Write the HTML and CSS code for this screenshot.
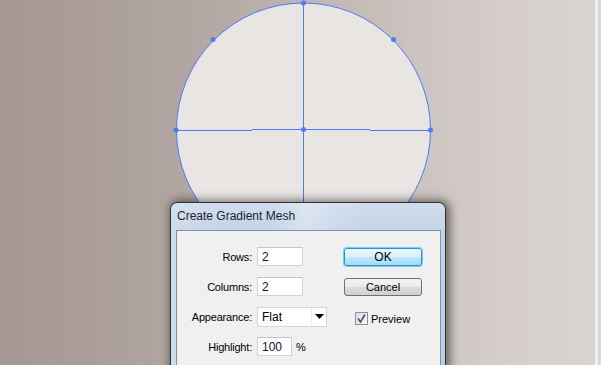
FILE: index.html
```html
<!DOCTYPE html>
<html lang="en">
<head>
    <meta charset="UTF-8">
    <title>Create Gradient Mesh</title>
    <link rel="stylesheet" href="styles.css">
</head>
<body>
    <div class="canvas">
        <svg class="artwork" width="601" height="365" viewBox="0 0 601 365">
            <rect x="595" y="0" width="3" height="365" fill="#f1efed"/>
            <rect x="598" y="0" width="3" height="365" fill="#dcd8d5"/>
            <circle cx="303.5" cy="130" r="127" fill="#e9e5e2" stroke="#4a7df7" stroke-width="1"/>
            <g stroke="#4a7df7" stroke-width="1" fill="none">
                <path d="M303.5 3 V129.5"/>
                <path d="M303.5 129.5 V365"/>
                <path d="M176 130.5 H252"/>
                <path d="M252 129.5 H370"/>
                <path d="M370 130.5 H430"/>
            </g>
            <g fill="#4a7df7">
                <circle cx="303.5" cy="3" r="2.5"/>
                <circle cx="176" cy="130" r="2.5"/>
                <circle cx="430.5" cy="130" r="2.5"/>
                <circle cx="303.5" cy="129.5" r="2.5"/>
                <circle cx="213" cy="39.5" r="2.5"/>
                <circle cx="393.5" cy="39.5" r="2.5"/>
            </g>
        </svg>

        <div class="dialog">
            <div class="title">Create Gradient Mesh</div>
            <div class="panel">
                <div class="form">
                    <label class="label">Rows:</label>
                    <div class="field"><input class="num" type="text" value="2"></div>
                    <div class="side"><button class="btn ok">OK</button></div>

                    <label class="label">Columns:</label>
                    <div class="field"><input class="num" type="text" value="2"></div>
                    <div class="side"><button class="btn">Cancel</button></div>

                    <label class="label">Appearance:</label>
                    <div class="field">
                        <div class="select">
                            <span class="select-value">Flat</span>
                            <span class="select-arrow">
                                <svg width="9" height="5" viewBox="0 0 9 5"><path d="M0 0 H9 L4.5 5 Z" fill="#000"/></svg>
                            </span>
                        </div>
                    </div>
                    <div class="side">
                        <div class="check">
                            <span class="box">
                                <svg width="11" height="11" viewBox="0 0 11 11"><path d="M2 5.5 L4.5 9 L9 1.5" fill="none" stroke="#3b4d8a" stroke-width="1.6"/></svg>
                            </span>
                            <span>Preview</span>
                        </div>
                    </div>

                    <label class="label">Highlight:</label>
                    <div class="field">
                        <input class="num short" type="text" value="100">
                        <span class="unit">%</span>
                    </div>
                    <div class="side"></div>
                </div>
            </div>
        </div>
    </div>
</body>
</html>
```

FILE: styles.css
```css
body {
    margin: 0;
    padding: 0;
    overflow: hidden;
    font-family: "Liberation Sans", Arial, sans-serif;
    font-size: 11px;
    color: #000;
}
.canvas {
    position: relative;
    width: 601px;
    height: 365px;
    overflow: hidden;
    background: linear-gradient(to right, #a59793 0%, #b3a8a4 35%, #c7beba 62%, #d7d1cd 88%, #dad4d0 100%);
}
.artwork {
    display: block;
}

/* dialog window */
.dialog {
    position: absolute;
    left: 170px;
    top: 202px;
    width: 274px;
    height: 200px;
    border: 1px solid #2f3338;
    border-bottom: none;
    border-radius: 7px 7px 0 0;
    box-shadow: 2px 0 10px 2px rgba(0, 0, 0, 0.5);
    background:
        linear-gradient(100deg, transparent 34%, rgba(255, 255, 255, 0.3) 44%, rgba(255, 255, 255, 0.12) 54%, transparent 64%),
        linear-gradient(75deg, rgba(255, 255, 255, 0.3) 0%, transparent 30%),
        linear-gradient(to bottom, #d0dcea 0%, #c3d4e7 14%, #b9cce1 100%);
}
.title {
    height: 27px;
    line-height: 27px;
    padding-left: 6px;
    font-size: 12px;
    color: #1d2230;
}
.panel {
    margin: 0 4px 0 5px;
    height: 180px;
    background: #f0f0f0;
    border: 1px solid #84919f;
    border-bottom: none;
    padding-top: 16px;
    box-sizing: border-box;
}
.form {
    display: grid;
    grid-template-columns: 75px 82px 78px;
    grid-auto-rows: 19px;
    column-gap: 5px;
    row-gap: 11px;
    align-items: center;
}
.label {
    text-align: right;
    white-space: nowrap;
    letter-spacing: -0.2px;
}
.field {
    display: flex;
    align-items: center;
    height: 100%;
}
.num {
    width: 46px;
    height: 19px;
    box-sizing: border-box;
    border: 1px solid #d2d2d2;
    border-top-color: #c4c4c4;
    background: #fff;
    padding: 0 0 0 4px;
    margin: 0;
    font-family: "Liberation Sans", Arial, sans-serif;
    font-size: 12px;
    color: #1d1034;
    outline: none;
}
.num.short {
    width: 35px;
}
.unit {
    margin-left: 4px;
    font-size: 11px;
}
.select {
    display: flex;
    width: 70px;
    height: 20px;
    box-sizing: border-box;
    border: 1px solid #d6d6d6;
    background: #fff;
}
.select-value {
    width: 49px;
    border-right: 1px solid #ececec;
    padding-left: 4px;
    line-height: 18px;
    font-size: 12px;
}
.select-arrow {
    flex: 1;
    display: flex;
    align-items: center;
    justify-content: center;
}
.side {
    display: flex;
    align-items: center;
    height: 100%;
}
.btn {
    width: 78px;
    height: 18px;
    padding: 0;
    margin: 0;
    border: 1px solid #707070;
    border-radius: 3px;
    background: linear-gradient(to bottom, #f3f3f3 0%, #ebebeb 48%, #dcdcdc 52%, #d0d0d0 100%);
    font-family: "Liberation Sans", Arial, sans-serif;
    font-size: 11px;
    color: #000;
}
.btn.ok {
    border: 1px solid #2f8fd0;
    box-shadow: 0 0 0 1px #6fd0f5;
    background: linear-gradient(to bottom, #eaf6fd 0%, #d9effc 48%, #bee6fd 52%, #a7d9f5 100%);
    font-size: 12px;
}
.check {
    display: flex;
    align-items: center;
    gap: 3px;
    margin-left: 11px;
    margin-top: 4px;
}
.box {
    width: 13px;
    height: 13px;
    box-sizing: border-box;
    border: 1px solid #8e8f8f;
    background: linear-gradient(135deg, #dcdcdc, #fbfbfb);
    display: flex;
    align-items: center;
    justify-content: center;
}
```
